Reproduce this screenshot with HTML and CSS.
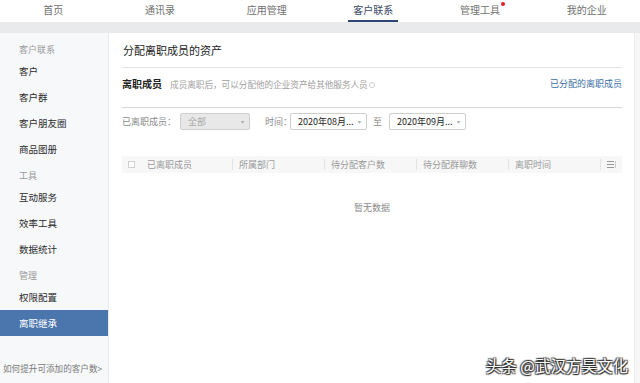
FILE: index.html
```html
<!DOCTYPE html>
<html lang="zh">

<head>
    <meta charset="UTF-8">
    <meta name="viewport" content="width=device-width, initial-scale=1.0">
    <link rel="stylesheet" href="styles.css">
    <title>客户联系</title>
</head>

<body>
    <nav class="topnav">
        <a href="#">首页</a>
        <a href="#">通讯录</a>
        <a href="#">应用管理</a>
        <a href="#" class="active">客户联系</a>
        <a href="#" class="dot">管理工具</a>
        <a href="#">我的企业</a>
    </nav>
    <div class="band"></div>

    <div class="page">
        <aside class="sidebar">
            <div class="group">客户联系</div>
            <div class="item">客户</div>
            <div class="item">客户群</div>
            <div class="item">客户朋友圈</div>
            <div class="item">商品图册</div>
            <div class="group">工具</div>
            <div class="item">互动服务</div>
            <div class="item">效率工具</div>
            <div class="item">数据统计</div>
            <div class="group">管理</div>
            <div class="item">权限配置</div>
            <div class="item current">离职继承</div>
            <div class="help">如何提升可添加的客户数&gt;</div>
        </aside>

        <main class="main">
            <h1 class="title">分配离职成员的资产</h1>

            <div class="intro">
                <div>
                    <b>离职成员</b>
                    <span class="desc">成员离职后，可以分配他的企业资产给其他服务人员<i class="q"></i></span>
                </div>
                <a href="#" class="link">已分配的离职成员</a>
            </div>

            <div class="filters">
                <span class="lbl">已离职成员：</span>
                <div class="select disabled w70"><span>全部</span><em>▾</em></div>
                <span class="lbl time">时间：</span>
                <div class="select w77"><span>2020年08月...</span><em>▾</em></div>
                <span class="lbl to">至</span>
                <div class="select w77"><span>2020年09月...</span><em>▾</em></div>
            </div>

            <div class="thead">
                <div class="c-check"><i class="box"></i></div>
                <div class="col">已离职成员</div>
                <div class="col">所属部门</div>
                <div class="col">待分配客户数</div>
                <div class="col">待分配群聊数</div>
                <div class="col">离职时间</div>
                <div class="c-set">
                    <svg width="9" height="7" viewBox="0 0 9 7">
                        <path d="M0 .5h7M0 3.5h7M0 6.5h7" stroke="#999" stroke-width="1" />
                        <path d="M8.5 0v7" stroke="#ccc" stroke-width="1" />
                    </svg>
                </div>
            </div>
            <div class="empty">暂无数据</div>
        </main>
        <div class="scroll"></div>
    </div>

    <div class="mark">头条 @武汉方昊文化</div>
</body>

</html>
```

FILE: styles.css
```css
* {
    margin: 0;
    padding: 0;
    box-sizing: border-box;
    font-family: "Noto Sans CJK SC", "Liberation Sans", sans-serif;
}

body {
    width: 640px;
    height: 383px;
    overflow: hidden;
    background: #fff;
    color: #333;
    font-size: 9px;
}

a {
    text-decoration: none;
}

.topnav {
    height: 22px;
    display: grid;
    grid-template-columns: repeat(6, 1fr);
    background: #fff;
}

.topnav a {
    position: relative;
    justify-self: center;
    font-size: 10px;
    line-height: 20px;
    color: #707070;
    padding: 0 5px;
}

.topnav a.active {
    color: #3a4a66;
    border-bottom: 2px solid #2e4670;
}

.topnav a.dot::after {
    content: "";
    position: absolute;
    top: 2px;
    right: 0;
    width: 4px;
    height: 4px;
    border-radius: 50%;
    background: #e0202a;
}

.band {
    height: 11px;
    background: #e9eaec;
}

.page {
    display: flex;
    height: 350px;
}

.sidebar {
    width: 109px;
    background: #f7f8fa;
    border-right: 1px solid #e8e9eb;
    padding-top: 3px;
}

.group {
    height: 22px;
    padding: 6px 0 0 19px;
    line-height: 16px;
    font-size: 9px;
    color: #9a9a9a;
}

.item {
    height: 26px;
    line-height: 26px;
    padding-left: 19px;
    font-size: 9.5px;
    color: #2b2b2b;
}

.item.current {
    background: #4b76ad;
    color: #fff;
}

.help {
    margin-top: 24px;
    padding-left: 3px;
    line-height: 16px;
    font-size: 8.6px;
    color: #7a7a7a;
    white-space: nowrap;
}

.main {
    flex: 1;
    padding: 0 12px 0 13px;
}

.scroll {
    width: 6px;
    border-left: 1px solid #ececec;
    background: #f6f6f6;
}

.title {
    height: 35px;
    line-height: 34px;
    padding-left: 1px;
    font-size: 11px;
    font-weight: normal;
    color: #222;
    border-bottom: 1px solid #e2e2e2;
}

.intro {
    height: 40px;
    display: flex;
    align-items: center;
    justify-content: space-between;
    padding-bottom: 8px;
    border-bottom: 1px solid #d9d9d9;
}

.intro b {
    font-size: 10px;
    color: #222;
    font-weight: bold;
}

.desc {
    margin-left: 6px;
    color: #a0a0a0;
    font-size: 8.6px;
}

.q {
    display: inline-block;
    width: 6px;
    height: 6px;
    margin-left: 1px;
    border: 1px solid #cfcfcf;
    border-radius: 50%;
}

.link {
    color: #3b6ea6;
    font-size: 9px;
}

.filters {
    height: 48px;
    display: flex;
    align-items: center;
    padding-bottom: 22px;
}

.lbl {
    color: #8a8a8a;
    font-size: 9px;
}

.lbl.time {
    margin-left: 15px;
    margin-right: -6px;
}

.lbl.to {
    margin: 0 3px 0 6px;
}

.select {
    height: 17px;
    margin-left: 4px;
    display: flex;
    align-items: center;
    justify-content: space-between;
    padding: 0 5px 0 7px;
    border: 1px solid #cfcfcf;
    border-radius: 2px;
    background: #fff;
    color: #222;
    font-size: 9px;
}

.select em {
    font-style: normal;
    color: #aaa;
    font-size: 6px;
}

.select.disabled {
    background: #e8e8e8;
    color: #a8a8a8;
}

.w70 {
    width: 70px;
}

.w77 {
    width: 77px;
}

.thead {
    height: 17px;
    display: flex;
    align-items: center;
    background: #f7f7f8;
    color: #9a9a9a;
    font-size: 9px;
}

.c-check {
    width: 19px;
    display: flex;
    justify-content: center;
}

.box {
    width: 7px;
    height: 7px;
    border: 1px solid #cfcfcf;
    background: #fff;
}

.col {
    width: 92px;
    padding-left: 6px;
    border-right: 1px solid #e3e3e3;
    line-height: 11px;
}

.c-set {
    flex: 1;
    display: flex;
    justify-content: center;
}

.empty {
    margin-top: 28px;
    text-align: center;
    color: #8a8a8a;
    font-size: 9px;
}

.mark {
    position: absolute;
    right: 12px;
    bottom: 7px;
    font-size: 15.5px;
    color: #fff;
    text-shadow: 1px 1px 1px #222, -1px -1px 1px #444, 1px -1px 1px #444, -1px 1px 1px #444;
}
```
